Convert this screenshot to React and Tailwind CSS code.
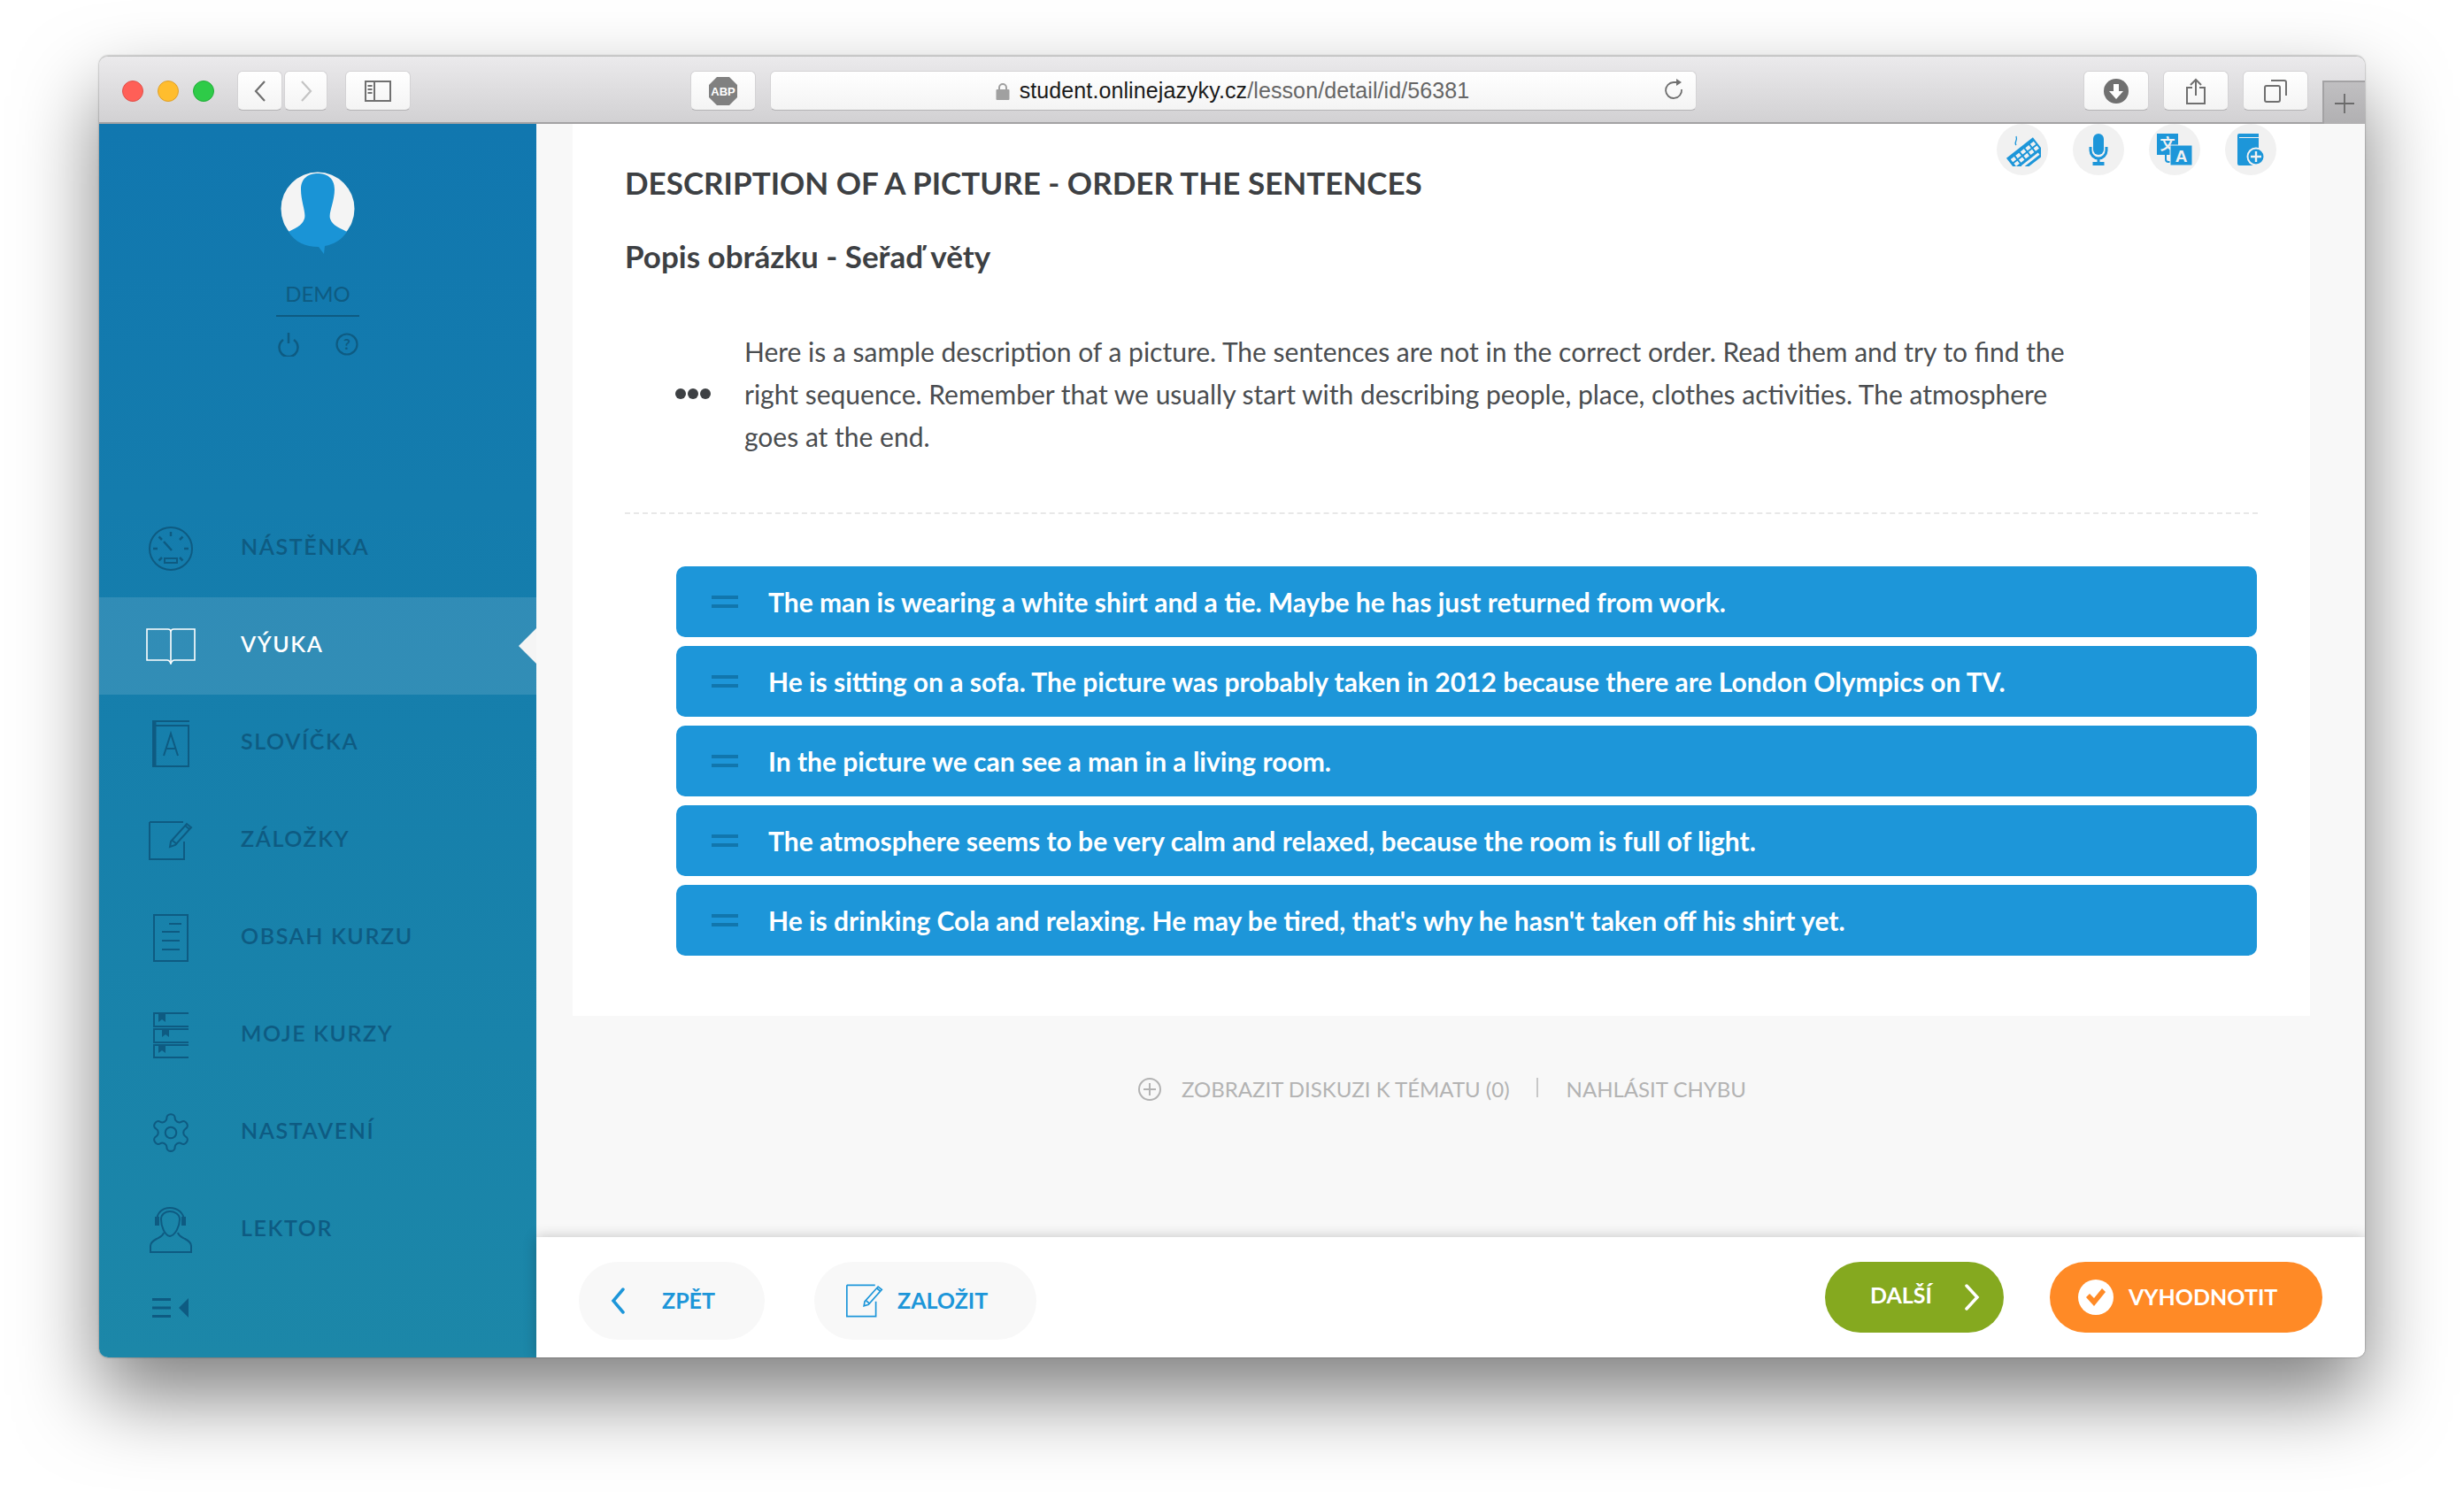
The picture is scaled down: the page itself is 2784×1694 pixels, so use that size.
import React from "react";

const NAV = "#0e5b82";

const Gauge = () => (
  <svg width="52" height="52" viewBox="0 0 52 52" fill="none" stroke={NAV} strokeWidth="2">
    <circle cx="26" cy="26" r="24" />
    <path d="M26 7v5M12.5 12.5l3.5 3.5M39.500 12.500l-3.500 3.500M6 26h5M41 26h5M12.500 39.500l3.500-3.500M39.500 39.500l-3.500-3.500" strokeWidth="2.500" />
    <path d="M18 18l9 10" strokeWidth="2.500" />
    <rect x="19" y="37" width="14" height="5" />
  </svg>
);
const BookOpen = () => (
  <svg width="56" height="42" viewBox="0 0 56 42" fill="none" stroke="#fff" strokeWidth="1.600">
    <path d="M1 2h24q2 0 3 2q1-2 3-2h24v35H32q-2 0-3 2l-1 2l-1-2q-1-2-3-2H1z" />
    <path d="M28 4v35" />
  </svg>
);
const Vocab = () => (
  <svg width="44" height="54" viewBox="0 0 44 54" fill="none" stroke={NAV} strokeWidth="2">
    <path d="M43 2H2v51h40V7H4" />
    <path d="M4 3v50" strokeWidth="3" />
    <path d="M14 41l8-25l8 25M17 33h10" />
  </svg>
);
const Note = ({ c = NAV, w = 50, h = 46 }) => (
  <svg width={w} height={h} viewBox="0 0 50 46" fill="none" stroke={c} strokeWidth="2">
    <path d="M1 2h38M1 2v42h39V24" />
    <path d="M25 24L43 4l5 4l-18 20l-6 2z" />
    <path d="M27 23l5 4M41 6l5 4" />
  </svg>
);
const Outline = () => (
  <svg width="40" height="54" viewBox="0 0 40 54" fill="none" stroke={NAV} strokeWidth="2">
    <rect x="1" y="1" width="38" height="52" />
    <path d="M18 11h14M10 20h20M10 30h20M10 40h20" />
  </svg>
);
const Courses = () => (
  <svg width="40" height="52" viewBox="0 0 40 52" fill="none" stroke={NAV} strokeWidth="2">
    <path d="M40 1H1v15h39M40 19H1v15h39M40 37H1v14h39" />
    <path d="M6 2h8v9l-4-3l-4 3zM10 19h8v9l-4-3l-4 3zM6 37h8v9l-4-3l-4 3z" fill={NAV} stroke="none" />
  </svg>
);
const Gear = () => (
  <svg width="50" height="50" viewBox="0 0 24 24" fill="none" stroke={NAV} strokeWidth="1">
    <path d="M12.220 2h-.440a2 2 0 0 0-2 2v.180a2 2 0 0 1-1 1.730l-.430.250a2 2 0 0 1-2 0l-.150-.080a2 2 0 0 0-2.730.730l-.220.380a2 2 0 0 0 .730 2.730l.150.100a2 2 0 0 1 1 1.720v.510a2 2 0 0 1-1 1.740l-.150.090a2 2 0 0 0-.730 2.730l.220.380a2 2 0 0 0 2.730.730l.150-.080a2 2 0 0 1 2 0l.430.250a2 2 0 0 1 1 1.730V20a2 2 0 0 0 2 2h.440a2 2 0 0 0 2-2v-.180a2 2 0 0 1 1-1.730l.430-.250a2 2 0 0 1 2 0l.150.080a2 2 0 0 0 2.730-.730l.220-.390a2 2 0 0 0-.730-2.730l-.150-.080a2 2 0 0 1-1-1.740v-.500a2 2 0 0 1 1-1.740l.150-.090a2 2 0 0 0 .730-2.730l-.220-.380a2 2 0 0 0-2.730-.730l-.150.080a2 2 0 0 1-2 0l-.430-.250a2 2 0 0 1-1-1.730V4a2 2 0 0 0-2-2z" />
    <circle cx="12" cy="12" r="3" />
  </svg>
);
const Lector = () => (
  <svg width="48" height="52" viewBox="0 0 48 52" fill="none" stroke={NAV} strokeWidth="2">
    <path d="M8 16C8 6 15 1 23 1s16 5 16 15" />
    <rect x="7" y="12" width="3" height="8" fill={NAV} />
    <rect x="37" y="12" width="3" height="8" fill={NAV} />
    <path d="M13 14c0-6 5-9 10-9s11 3 11 9c0 8-5 18-11 19c-6-1-10-11-10-19z" />
    <path d="M16 29c-1 4-4 5-8 7c-4 2-7 4-7 8v7h46v-7c0-4-3-6-7-8c-4-2-7-3-8-7" />
  </svg>
);

const NavRow = ({ icon, label, active }) => (
  <div className={`relative flex h-[110px] items-center ${active ? "bg-white/[0.12]" : ""}`}>
    <div className="flex w-[160px] justify-center pl-[2px]">{icon}</div>
    <span
      className={`mb-[4px] text-[25px] font-semibold tracking-[1.6px] ${active ? "text-white" : "text-[#0e5b82]"}`}
    >
      {label}
    </span>
    {active && (
      <div className="absolute right-0 top-[35px] h-0 w-0 border-y-[20px] border-r-[20px] border-y-transparent border-r-[#f5f5f5]" />
    )}
  </div>
);

const Sidebar = () => (
  <div className="flex w-[494px] shrink-0 flex-col items-stretch bg-gradient-to-b from-[#1177af] to-[#1c87a8]">
    <div className="flex h-[425px] flex-col items-center pt-[54px]">
      <svg width="84" height="93" viewBox="0 0 84 93">
        <circle cx="42" cy="42" r="41.500" fill="#f4f4f4" />
        <path d="M9 68C16 64 24 62 27 53C29 46 23 34 23 20C23 7 32 2 42 2C52 2 61 7 61 20C61 34 54 46 56 53C59 62 68 64 75 68C68 78 60 82 50 84L49 93L43 85C28 85 17 80 9 68Z" fill="#1a94d6" />
      </svg>
      <div className="mt-[28px] text-[24px] leading-[34px] text-[#0e5b82]">DEMO</div>
      <div className="mt-[7px] h-[2px] w-[94px] bg-[#0e5b82]" />
      <div className="mt-[17px] flex w-[94px] justify-between px-[1px]">
        <svg width="26" height="28" viewBox="0 0 26 28" fill="none" stroke="#0e5b82" strokeWidth="2.500">
          <path d="M7 9a10.500 10.500 0 1 0 12 0M13 1v12" />
        </svg>
        <svg width="26" height="28" viewBox="0 0 26 28" fill="none" stroke="#0e5b82" strokeWidth="2.200">
          <circle cx="13" cy="14" r="11.500" />
          <text x="13" y="20" textAnchor="middle" fontSize="17" fontWeight="700" fill="#0e5b82" stroke="none" fontFamily="Lato, sans-serif">?</text>
        </svg>
      </div>
    </div>
    <NavRow icon={<Gauge />} label="NÁSTĚNKA" />
    <NavRow icon={<BookOpen />} label="VÝUKA" active />
    <NavRow icon={<Vocab />} label="SLOVÍČKA" />
    <NavRow icon={<Note />} label="ZÁLOŽKY" />
    <NavRow icon={<Outline />} label="OBSAH KURZU" />
    <NavRow icon={<Courses />} label="MOJE KURZY" />
    <NavRow icon={<Gear />} label="NASTAVENÍ" />
    <NavRow icon={<Lector />} label="LEKTOR" />
    <div className="pl-[60px] pt-[21px]">
      <svg width="42" height="24" viewBox="0 0 42 24" fill="#0e5b82">
        <rect x="0" y="1" width="21" height="3" />
        <rect x="0" y="10.500" width="21" height="3" />
        <rect x="0" y="20" width="21" height="3" />
        <path d="M41 1v22L30 12z" />
      </svg>
    </div>
  </div>
);

const ToolBtn = ({ w, children, cls = "" }) => (
  <div
    style={{ width: w }}
    className={`flex h-[45px] items-center justify-center rounded-[6px] border border-[#d4d3d5] border-b-[#b4b3b5] bg-gradient-to-b from-white to-[#f4f4f4] ${cls}`}
  >
    {children}
  </div>
);

const TitleBar = () => (
  <div className="flex h-[76px] shrink-0 border-b-2 border-[#a3a2a4] bg-gradient-to-b from-[#ebeaec] to-[#d2d1d3] pt-[16px]">
    <div className="ml-[26px] flex h-[45px] items-center gap-[16px]">
      <div className="h-[24px] w-[24px] rounded-full border border-[#e0504a] bg-[#ff5f57]" />
      <div className="h-[24px] w-[24px] rounded-full border border-[#dfa02c] bg-[#ffbd2e]" />
      <div className="h-[24px] w-[24px] rounded-full border border-[#23ad3a] bg-[#2ecb48]" />
    </div>
    <div className="ml-[26px] flex gap-[2px]">
      <ToolBtn w={51}>
        <svg width="16" height="26" viewBox="0 0 16 26" fill="none" stroke="#707070" strokeWidth="2.200"><path d="M13 2L3 13l10 11" /></svg>
      </ToolBtn>
      <ToolBtn w={49}>
        <svg width="16" height="26" viewBox="0 0 16 26" fill="none" stroke="#c4c4c4" strokeWidth="2.200"><path d="M3 2l10 11L3 24" /></svg>
      </ToolBtn>
    </div>
    <ToolBtn w={74} cls="ml-[20px]">
      <svg width="30" height="24" viewBox="0 0 30 24" fill="none" stroke="#707070" strokeWidth="2">
        <rect x="1" y="1" width="28" height="22" />
        <path d="M11 1v22" />
        <path d="M3.500 6h5M3.500 10h5M3.500 14h5" />
      </svg>
    </ToolBtn>
    <ToolBtn w={74} cls="ml-[316px]">
      <svg width="34" height="34" viewBox="0 0 34 34">
        <path d="M10 1h14l9 9v14l-9 9H10l-9-9V10z" fill="#808080" />
        <text x="17" y="22" textAnchor="middle" fontSize="13" fontWeight="700" fill="#fff" fontFamily="Liberation Sans, sans-serif">ABP</text>
      </svg>
    </ToolBtn>
    <div className="relative ml-[16px] flex h-[45px] w-[1047px] items-center justify-center rounded-[6px] border border-[#d4d3d5] border-b-[#b4b3b5] bg-gradient-to-b from-white to-[#f4f4f4] pr-[2px]">
      <svg width="16" height="20" viewBox="0 0 16 20" className="mr-[11px]">
        <path d="M4 9V6a4 4 0 0 1 8 0v3" fill="none" stroke="#a0a0a0" strokeWidth="2" />
        <rect x="0.500" y="8" width="15" height="12" rx="1" fill="#a0a0a0" />
      </svg>
      <span className="font-['Liberation_Sans',sans-serif] text-[25px] leading-none tracking-[0.1px] text-[#1a1a1a]">
        student.onlinejazyky.cz<span className="text-[#666]">/lesson/detail/id/56381</span>
      </span>
      <svg width="26" height="28" viewBox="0 0 26 28" fill="none" stroke="#707070" strokeWidth="1.800" className="absolute right-[11px] top-[8px]">
        <path d="M21 12a9 9 0 1 1-9-8h5" />
        <path d="M15 0l6 4l-6 4z" fill="#707070" stroke="none" />
      </svg>
    </div>
    <div className="ml-auto flex">
      <ToolBtn w={74}>
        <svg width="28" height="28" viewBox="0 0 28 28">
          <circle cx="14" cy="14" r="14" fill="#707070" />
          <path d="M11 6h6v8h5l-8 9l-8-9h5z" fill="#fff" />
        </svg>
      </ToolBtn>
      <ToolBtn w={74} cls="ml-[16px]">
        <svg width="24" height="30" viewBox="0 0 24 30" fill="none" stroke="#707070" strokeWidth="2">
          <path d="M8 11H2v18h20V11h-6M12 20V2M6 8l6-6l6 6" />
        </svg>
      </ToolBtn>
      <ToolBtn w={74} cls="ml-[16px]">
        <svg width="26" height="26" viewBox="0 0 26 26" fill="none" stroke="#707070" strokeWidth="2">
          <rect x="1" y="7" width="17" height="18" rx="2" />
          <path d="M8 1h15a2 2 0 0 1 2 2v15" />
        </svg>
      </ToolBtn>
      <div className="ml-[16px] mt-[11px] flex h-[49px] w-[48px] items-center justify-center border-l-2 border-t-2 border-[#a3a2a4] bg-gradient-to-b from-[#c0bfc1] to-[#b1b0b2]">
        <svg width="22" height="22" viewBox="0 0 22 22" stroke="#6a6a6a" strokeWidth="1.800"><path d="M11 0v22M0 11h22" /></svg>
      </div>
    </div>
  </div>
);

const IconDot = ({ children }) => (
  <div className="flex h-[58px] w-[58px] items-center justify-center rounded-full bg-[#f1f1f1]">{children}</div>
);

const TopIcons = () => (
  <div className="absolute right-[38px] top-0 flex gap-[28px]">
    <IconDot>
      <svg width="42" height="38" viewBox="0 0 42 38">
        <g transform="rotate(-38 21 21) translate(2 10)">
          <rect x="0" y="6" width="38" height="23" fill="#1d96d9" />
          <path d="M3 10h5v4H3zM10 10h5v4h-5zM17 10h5v4h-5zM24 10h5v4h-5zM31 10h5v4h-5zM3 16h5v4H3zM10 16h5v4h-5zM17 16h5v4h-5zM24 16h5v4h-5zM31 16h5v4h-5zM8 23h24v3H8z" fill="#f1f1f1" />
        </g>
        <path d="M14 14c-3-3 2-5 0-10" fill="none" stroke="#1d96d9" strokeWidth="1.300" />
      </svg>
    </IconDot>
    <IconDot>
      <svg width="22" height="36" viewBox="0 0 22 36">
        <rect x="5" y="0" width="12" height="24" rx="6" fill="#1d96d9" />
        <path d="M2 15v4a9 9 0 0 0 18 0v-4" fill="none" stroke="#1d96d9" strokeWidth="3" />
        <path d="M9.500 27h3v5h5v4h-13v-4h5z" fill="#1d96d9" />
      </svg>
    </IconDot>
    <IconDot>
      <svg width="40" height="36" viewBox="0 0 40 36">
        <rect x="0" y="0" width="24" height="24" fill="#1d96d9" />
        <text x="12" y="18" textAnchor="middle" fontSize="17" fontWeight="700" fill="#f1f1f1" fontFamily="'Noto Sans CJK SC', sans-serif">文</text>
        <path d="M10 24v5q0 3 3 3h4" fill="none" stroke="#1d96d9" strokeWidth="2" />
        <rect x="15" y="13" width="25" height="23" fill="#1d96d9" stroke="#f1f1f1" strokeWidth="1" />
        <text x="27.500" y="32" textAnchor="middle" fontSize="19" fontWeight="700" fill="#f1f1f1" fontFamily="Liberation Sans, sans-serif">A</text>
      </svg>
    </IconDot>
    <IconDot>
      <svg width="32" height="36" viewBox="0 0 32 36">
        <path d="M1 2q0-2 2-2h22v4H3v1h22v31H3q-2 0-2-2z" fill="#1d96d9" />
        <circle cx="22" cy="26" r="9.500" fill="#1d96d9" stroke="#f1f1f1" strokeWidth="2" />
        <path d="M22 20v12M16 26h12" stroke="#f1f1f1" strokeWidth="2.400" />
      </svg>
    </IconDot>
  </div>
);

const SENTENCES = [
  "The man is wearing a white shirt and a tie. Maybe he has just returned from work.",
  "He is sitting on a sofa. The picture was probably taken in 2012 because there are London Olympics on TV.",
  "In the picture we can see a man in a living room.",
  "The atmosphere seems to be very calm and relaxed, because the room is full of light.",
  "He is drinking Cola and relaxing. He may be tired, that's why he hasn't taken off his shirt yet.",
];

const Card = () => (
  <div className="relative ml-[41px] h-[1008px] w-[1963px] bg-white px-[59px] pt-[46px]">
    <TopIcons />
    <h1 className="text-[35px] font-bold leading-[40px] text-[#3d4043]">DESCRIPTION OF A PICTURE - ORDER THE SENTENCES</h1>
    <h2 className="mt-[43px] text-[35px] font-bold leading-[40px] text-[#3d4043]">Popis obrázku - Seřaď věty</h2>
    <div className="mt-[64px] flex items-center pl-[57px]">
      <div className="flex w-[78px] gap-[2px]">
        <div className="h-[12px] w-[12px] rounded-full bg-[#3d4043]" />
        <div className="h-[12px] w-[12px] rounded-full bg-[#3d4043]" />
        <div className="h-[12px] w-[12px] rounded-full bg-[#3d4043]" />
      </div>
      <div className="text-[30px] leading-[48px] text-[#4a4d50]">
        <div className="whitespace-nowrap">Here is a sample description of a picture. The sentences are not in the correct order. Read them and try to find the</div>
        <div className="whitespace-nowrap">right sequence. Remember that we usually start with describing people, place, clothes activities. The atmosphere</div>
        <div className="whitespace-nowrap">goes at the end.</div>
      </div>
    </div>
    <div className="mt-[62px] border-t-2 border-dashed border-[#e8e8e8]" />
    <div className="ml-[58px] mr-[1px] mt-[59px] flex flex-col gap-[10px]">
      {SENTENCES.map((s) => (
        <div key={s} className="flex h-[80px] items-center rounded-[10px] bg-[#1d96d9] pl-[40px]">
          <div className="flex w-[64px] flex-col gap-[6px]">
            <div className="h-[4px] w-[30px] bg-[#1176ad]" />
            <div className="h-[4px] w-[30px] bg-[#1176ad]" />
          </div>
          <span className="whitespace-nowrap text-[30px] font-bold text-white">{s}</span>
        </div>
      ))}
    </div>
  </div>
);

const BottomBar = () => (
  <div className="relative flex h-[136px] shrink-0 items-start bg-white pt-[28px] shadow-[0_0_14px_rgba(0,0,0,0.22)]">
    <div className="ml-[48px] flex h-[88px] w-[210px] items-center rounded-full bg-[#f8f8f8] pl-[36px]">
      <svg width="16" height="30" viewBox="0 0 16 30" fill="none" stroke="#1d96d9" strokeWidth="3.500" strokeLinecap="round"><path d="M14 2L3 15l11 13" /></svg>
      <span className="ml-[42px] text-[25px] font-bold text-[#1d96d9]">ZPĚT</span>
    </div>
    <div className="ml-[56px] flex h-[88px] w-[251px] items-center rounded-full bg-[#f8f8f8] pl-[36px]">
      <Note c="#1d96d9" w={42} h={40} />
      <span className="ml-[16px] text-[25px] font-bold text-[#1d96d9]">ZALOŽIT</span>
    </div>
    <div className="ml-auto flex h-[80px] w-[202px] items-center rounded-full bg-[#85a91f] pl-[51px]">
      <span className="mb-[4px] text-[25px] font-bold text-white">DALŠÍ</span>
      <svg width="18" height="30" viewBox="0 0 18 30" fill="none" stroke="#fff" strokeWidth="3.500" strokeLinecap="round" className="ml-[36px]"><path d="M3 2l12 13L3 28" /></svg>
    </div>
    <div className="ml-[52px] mr-[48px] flex h-[80px] w-[308px] items-center rounded-full bg-[#ff8a26] pl-[32px]">
      <svg width="40" height="40" viewBox="0 0 40 40">
        <circle cx="20" cy="20" r="20" fill="#fff" />
        <path d="M9 20l4-4l5 5l9-11l4 4l-13 16z" fill="#ff8a26" />
      </svg>
      <span className="ml-[17px] text-[25px] font-bold text-white">VYHODNOTIT</span>
    </div>
  </div>
);

export default function App() {
  return (
    <div className="h-[1694px] w-[2784px] overflow-hidden bg-white pl-[112px] pt-[63px] font-['Lato',sans-serif]">
      <div className="flex h-[1471px] w-[2560px] flex-col overflow-hidden rounded-[10px] border-t border-[#c0c0c0] shadow-[0_44px_90px_rgba(0,0,0,0.5),0_0_2px_rgba(0,0,0,0.5)]">
        <TitleBar />
        <div className="flex min-h-0 flex-1">
          <Sidebar />
          <div className="flex min-w-0 flex-1 flex-col bg-[#f8f8f8]">
            <div className="min-h-0 flex-1">
              <Card />
              <div className="flex items-center pl-[680px] pt-[68px] text-[24px] leading-[30px] text-[#b3b3b3]">
                <svg width="26" height="26" viewBox="0 0 26 26" fill="none" stroke="#b3b3b3" strokeWidth="2"><circle cx="13" cy="13" r="12" /><path d="M13 6v14M6 13h14" /></svg>
                <span className="ml-[23px]">ZOBRAZIT DISKUZI K TÉMATU (0)</span>
                <div className="ml-[30px] mb-[4px] h-[22px] w-[2px] bg-[#c8c8c8]" />
                <span className="ml-[32px]">NAHLÁSIT CHYBU</span>
              </div>
            </div>
            <BottomBar />
          </div>
        </div>
      </div>
    </div>
  );
}
